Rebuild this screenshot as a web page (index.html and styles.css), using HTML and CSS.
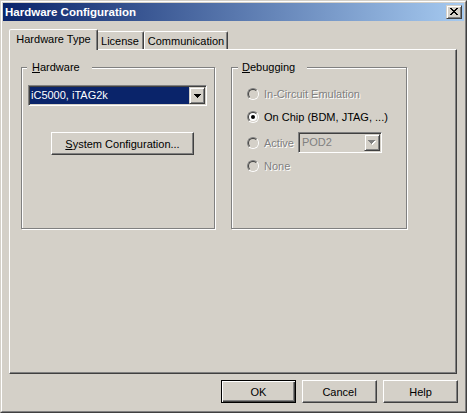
FILE: index.html
```html
<!DOCTYPE html>
<html lang="en">
<head>
<meta charset="utf-8">
<title>Hardware Configuration</title>
<link rel="stylesheet" href="styles.css">
</head>
<body>
<div class="window">
  <div class="frame">
    <div class="titlebar">
      <span class="title">Hardware Configuration</span>
      <div class="close">
        <svg width="8" height="7" viewBox="0 0 8 7" shape-rendering="crispEdges">
          <path d="M0 0h2v1h-2zM6 0h2v1h-2zM1 1h2v1h-2zM5 1h2v1h-2zM2 2h4v1h-4zM3 3h2v1h-2zM2 4h4v1h-4zM1 5h2v1h-2zM5 5h2v1h-2zM0 6h2v1h-2zM6 6h2v1h-2z" fill="#000"/>
        </svg>
      </div>
    </div>

    <div class="content">
      <div class="tabs">
        <div class="tab tab-active">Hardware Type</div>
        <div class="tab tab-license">License</div>
        <div class="tab tab-comm">Communication</div>
      </div>

      <div class="pane">
        <div class="group group-hw">
          <div class="group-title"><u>H</u>ardware</div>
          <div class="combo combo-hw">
            <div class="combo-text"><span class="selected">iC5000, iTAG2k</span></div>
            <div class="combo-btn">
              <svg width="7" height="4" viewBox="0 0 7 4" shape-rendering="crispEdges">
                <path d="M0 0h7v1h-1v1h-1v1h-1v1h-1v-1h-1v-1h-1v-1h-1z" fill="#000"/>
              </svg>
            </div>
          </div>
          <div class="btn btn-syscfg"><span><u>S</u>ystem Configuration...</span></div>
        </div>

        <div class="group group-dbg">
          <div class="group-title"><u>D</u>ebugging</div>
          <div class="radio-row row-1 disabled">
            <span class="radio"><span class="radio-inner"></span></span>
            <span class="label">In-Circuit Emulation</span>
          </div>
          <div class="radio-row row-2">
            <span class="radio"><span class="radio-inner"><span class="dot"></span></span></span>
            <span class="label">On Chip (BDM, JTAG, ...)</span>
          </div>
          <div class="radio-row row-3 disabled">
            <span class="radio"><span class="radio-inner"></span></span>
            <span class="label">Active</span>
            <div class="combo combo-pod">
              <div class="combo-text"><span class="value">POD2</span></div>
              <div class="combo-btn">
                <svg width="8" height="5" viewBox="0 0 8 5" shape-rendering="crispEdges">
                  <path transform="translate(1 1)" d="M0 0h7v1h-1v1h-1v1h-1v1h-1v-1h-1v-1h-1v-1h-1z" fill="#fff"/>
                  <path d="M0 0h7v1h-1v1h-1v1h-1v1h-1v-1h-1v-1h-1v-1h-1z" fill="#808080"/>
                </svg>
              </div>
            </div>
          </div>
          <div class="radio-row row-4 disabled">
            <span class="radio"><span class="radio-inner"></span></span>
            <span class="label">None</span>
          </div>
        </div>
      </div>

      <div class="footer">
        <div class="btn btn-default"><span>OK</span></div>
        <div class="btn"><span>Cancel</span></div>
        <div class="btn"><span>Help</span></div>
      </div>
    </div>
  </div>
</div>
</body>
</html>
```

FILE: styles.css
```css
* {
  box-sizing: border-box;
}

html,
body {
  margin: 0;
  padding: 0;
}

body {
  width: 467px;
  height: 413px;
  overflow: hidden;
  background: #d4d0c8;
  color: #000;
  font: 11px "Liberation Sans", Arial, sans-serif;
}

/* Window chrome: classic two-ring raised edge */
.window {
  width: 467px;
  height: 413px;
  border: 1px solid;
  border-color: #d4d0c8 #404040 #404040 #d4d0c8;
  background: #d4d0c8;
}

.frame {
  height: 100%;
  border: 1px solid;
  border-color: #fff #808080 #808080 #fff;
  padding: 1px;
  display: flex;
  flex-direction: column;
}

.titlebar {
  flex: none;
  height: 18px;
  display: flex;
  align-items: center;
  padding: 0 2px;
  background: linear-gradient(to right, #0a246a, #a6caf0);
  color: #fff;
}

.title {
  flex: 1;
  font-weight: bold;
  font-size: 11.5px;
  line-height: 14px;
}

.close {
  width: 16px;
  height: 14px;
  background: #d4d0c8;
  border: 1px solid;
  border-color: #d4d0c8 #404040 #404040 #d4d0c8;
  box-shadow: inset 1px 1px #fff, inset -1px -1px #808080;
  padding: 2px 0 0 3px;
}

.close svg {
  display: block;
}

/* Dialog body */
.content {
  flex: 1;
  display: flex;
  flex-direction: column;
  padding: 8px 0 0 6px;
}

.tabs {
  display: flex;
  align-items: flex-end;
  height: 20px;
}

.tab {
  height: 18px;
  border: 1px solid;
  border-bottom: 0;
  border-color: #fff #404040 transparent #fff;
  border-radius: 2px 2px 0 0;
  box-shadow: inset -1px 0 #808080;
  background: #d4d0c8;
  padding-top: 3px;
  line-height: 13px;
  text-align: center;
  white-space: nowrap;
}

.tab-active {
  position: relative;
  z-index: 1;
  width: 89px;
  height: 21px;
  margin: 0 -2px -1px 0;
}

.tab-license {
  width: 48px;
}

.tab-comm {
  width: 84px;
}

.pane {
  width: 448px;
  height: 325px;
  border: 1px solid;
  border-color: #fff #404040 #404040 #fff;
  box-shadow: inset -1px -1px #808080;
  padding: 17px 0 0 11px;
  display: flex;
  align-items: flex-start;
  gap: 16px;
}

/* Etched group boxes */
.group {
  height: 162px;
  border: 1px solid #808080;
  box-shadow: inset 1px 1px #fff, 1px 1px #fff;
}

.group-hw {
  width: 194px;
}

.group-dbg {
  width: 176px;
}

.group-title {
  display: table;
  margin: -7px 0 0 5px;
  padding: 0 12px 0 5px;
  line-height: 13px;
  background: #d4d0c8;
}

.group-dbg .group-title {
  margin-left: 6px;
  padding-left: 4px;
}

/* Combo boxes */
.combo {
  display: flex;
  height: 21px;
  border: 1px solid;
  border-color: #808080 #fff #fff #808080;
  box-shadow: inset 1px 1px #404040, inset -1px -1px #d4d0c8;
  padding: 1px;
  background: #fff;
}

.combo-text {
  flex: 1;
  display: flex;
  min-width: 0;
}

.combo-hw {
  width: 179px;
  margin: 11px 0 0 6px;
}

.selected {
  flex: 1;
  background: #0a246a;
  color: #fff;
  padding-left: 1px;
  line-height: 17px;
  white-space: nowrap;
}

.combo-btn {
  flex: none;
  width: 16px;
  border: 1px solid;
  border-color: #d4d0c8 #404040 #404040 #d4d0c8;
  box-shadow: inset 1px 1px #fff, inset -1px -1px #808080;
  background: #d4d0c8;
  display: flex;
  align-items: center;
  justify-content: center;
}

.combo-btn svg {
  display: block;
}

.combo-pod {
  width: 84px;
  margin-left: 4px;
  background: #d4d0c8;
}

.combo-pod .value {
  color: #808080;
  padding-left: 2px;
  line-height: 17px;
}

/* Push buttons */
.btn {
  display: flex;
  align-items: center;
  justify-content: center;
  height: 23px;
  border: 1px solid;
  border-color: #fff #404040 #404040 #fff;
  box-shadow: inset -1px -1px #808080;
  background: #d4d0c8;
  white-space: nowrap;
}

.btn-syscfg {
  width: 143px;
  margin: 26px 0 0 29px;
}

.btn-default {
  border-color: #000;
  box-shadow: inset 1px 1px #fff, inset -1px -1px #404040, inset -2px -2px #808080;
}

.footer {
  display: flex;
  justify-content: flex-end;
  gap: 6px;
  margin-top: 6px;
  padding-right: 6px;
}

.footer .btn {
  width: 75px;
}

/* Radio buttons */
.radio-row {
  display: flex;
  align-items: center;
  height: 20px;
  margin-top: 3px;
}

.radio-row.row-1 {
  margin-top: 10px;
}

.radio-row.row-3 {
  height: 21px;
  margin-top: 5px;
}

.radio {
  flex: none;
  width: 12px;
  height: 12px;
  margin: 0 5px 0 15px;
  border-radius: 50%;
  border: 1px solid;
  border-color: #808080 #fff #fff #808080;
}

.radio-inner {
  display: flex;
  align-items: center;
  justify-content: center;
  width: 10px;
  height: 10px;
  border-radius: 50%;
  border: 1px solid;
  border-color: #404040 #d4d0c8 #d4d0c8 #404040;
  background: #fff;
}

.dot {
  width: 4px;
  height: 4px;
  border-radius: 50%;
  background: #000;
}

.disabled .radio-inner {
  background: #d4d0c8;
}

.disabled .label {
  color: #808080;
  text-shadow: 1px 1px 0 #fff;
}

.label {
  white-space: nowrap;
}
```
